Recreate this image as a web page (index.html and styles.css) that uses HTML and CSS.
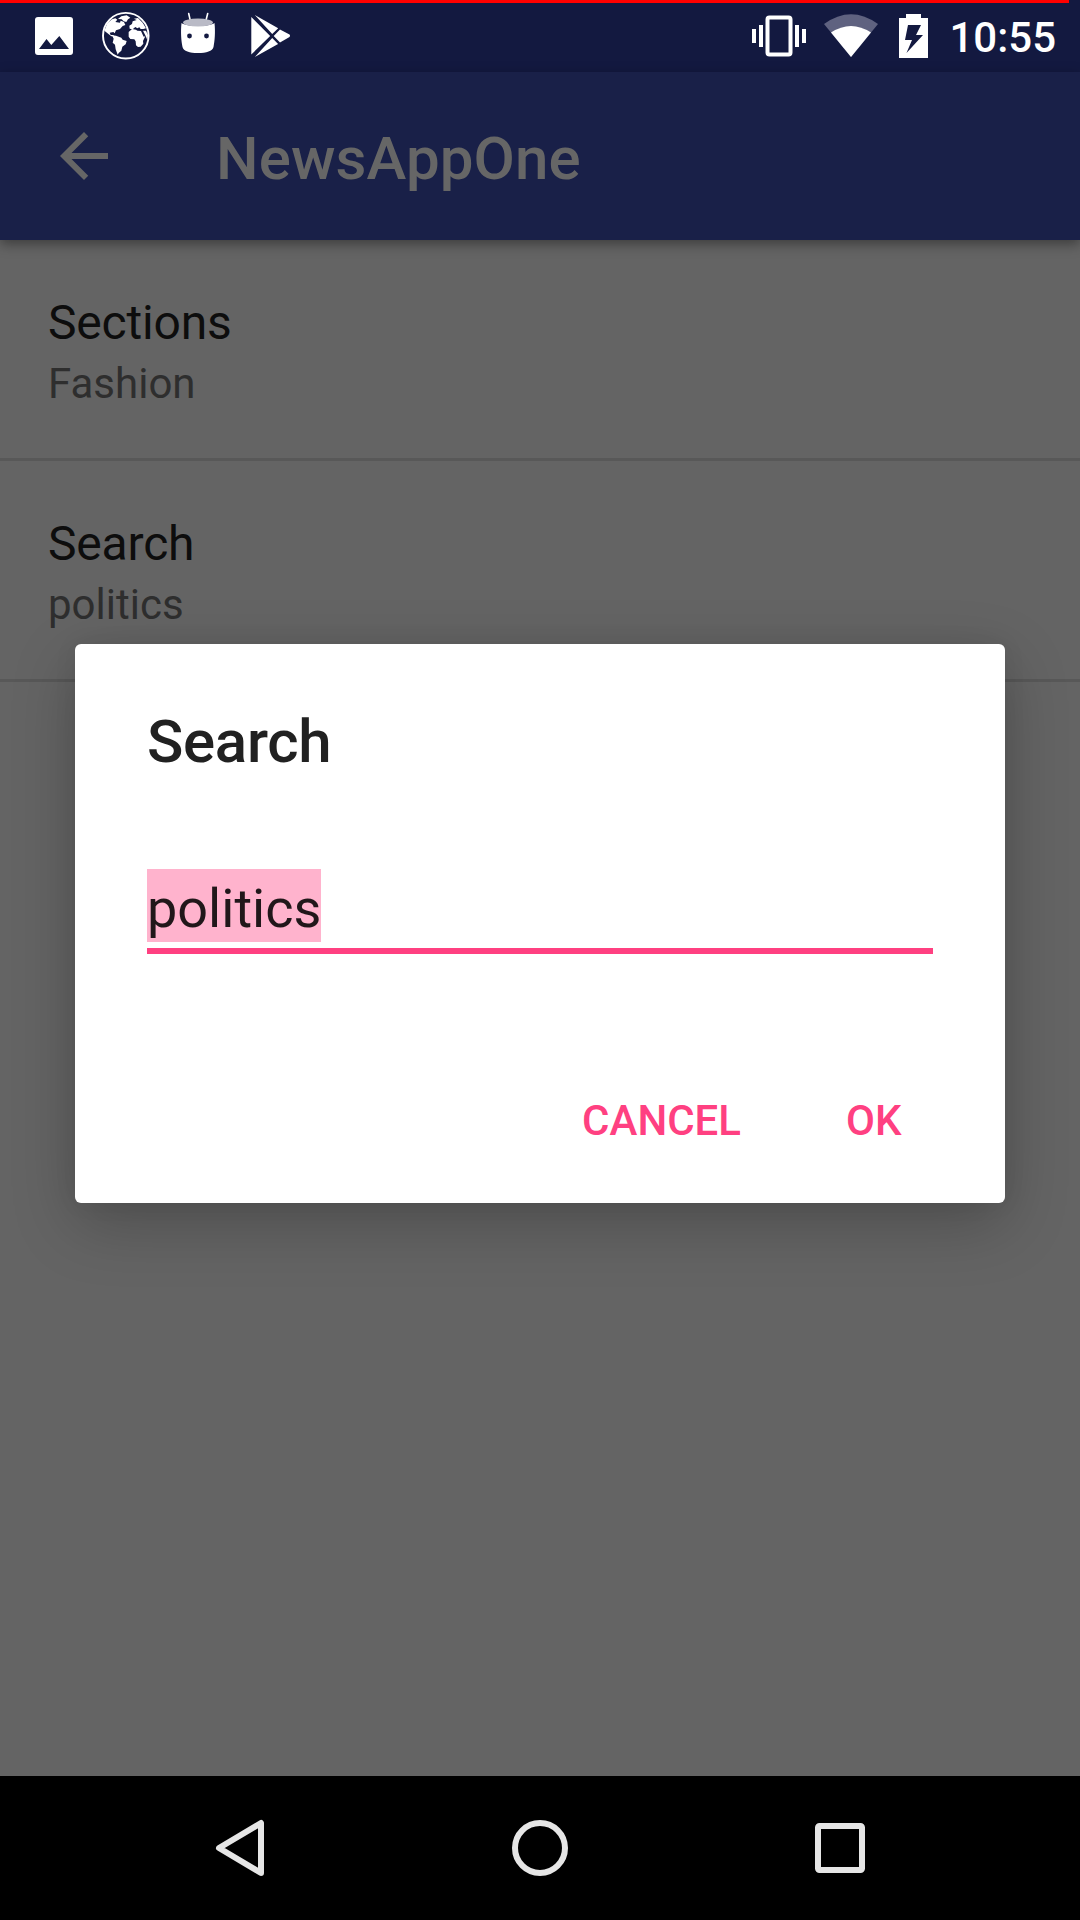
FILE: index.html
```html
<!DOCTYPE html>
<html lang="en">
<head>
<meta charset="utf-8">
<title>NewsAppOne</title>
<link rel="stylesheet" href="styles.css">
</head>
<body>
<div class="screen">
  <header class="status-bar">
    <div class="progress"></div>
    <div class="status-icons">
      <svg class="status-icon" viewBox="0 0 72 72"><path fill="#fff" fill-rule="evenodd" d="M21 17h32a3 3 0 0 1 3 3v32a3 3 0 0 1-3 3H21a3 3 0 0 1-3-3V20a3 3 0 0 1 3-3zM22 49h30L42.300 36l-8 9-4.800-6z"/></svg>
      <svg class="status-icon" viewBox="0 0 72 72">
        <circle cx="36.800" cy="35.700" r="22.800" fill="none" stroke="#fff" stroke-width="1.900"/>
        <g transform="translate(9 8) scale(.3333)" fill="#fff">
          <path d="M19 68L28 46l14-12 10-3 6 4-6 7 14 2 2-6 10 4 4 9-8 3-8 9-12 4-4 9-4-4-11 2 3 7 8 0 2 4-8 0z"/>
          <path d="M60 33l10-8 16-3 11 7-7 5-5 8-8-2-6-6z"/>
          <path d="M42 82l12 1 16 6 4 6 12 4-3 10-10 7-3 12-8 7-3 5-6-16-2-14-7-6 3-12z"/>
          <path d="M95 62l-1-9 8-5 2-8 12-4-8-4 12-2 14 14 10 17-8 2-8 0-4-5-6 3-6-4-8 7z"/>
          <path d="M92 72l10-9 12 2 4 3 11 1 8 17 5-1-7 14 1 8-8 9-8 1-6-5-1-12-4-6-12-1-5-7z"/>
          <path d="M135 68l9 0 6 14-2 14-5-12z"/>
        </g>
      </svg>
      <svg class="status-icon" viewBox="0 0 72 72">
        <path d="M27.700 13.500l1.800 8M46.700 13.500l-2 8" stroke="#fff" stroke-width="1.600" stroke-linecap="round"/>
        <path fill="#fff" d="M20.500 23c5 4 28 4 33 0 1 9 .2 18-1 24-1 4-7 6-15.500 6s-14.500-2-15.500-6c-1.200-6-2-15-1-24z"/>
        <ellipse cx="37" cy="22.500" rx="15" ry="4" fill="#b9bac6"/>
        <circle cx="28.500" cy="36" r="2.400" fill="#131940"/><circle cx="45.500" cy="36" r="2.400" fill="#131940"/>
      </svg>
      <svg class="status-icon" viewBox="0 0 72 72"><path fill="#fff" d="M18.300 17v37.500L37.200 36zM21.800 15L39.200 34l6-5.800zM47 29.500L40.700 36l6.300 6.500 9.500-5.500q1-1.200 0-2.400zM39.200 38L21.800 57l23.300-13z"/></svg>
    </div>
    <div class="system-icons">
      <svg class="vibrate" viewBox="0 0 54 42"><rect x="15.500" y="2.500" width="23" height="37" rx="2" fill="none" stroke="#fff" stroke-width="4"/><path fill="#fff" d="M0 14h4v14H0zM7 10h4v22H7zM43 10h4v22h-4zM50 14h4v14h-4z"/></svg>
      <svg class="wifi" viewBox="0 0 54 43"><path fill="#5f6280" d="M0 10Q27-9.500 54 10L27 43z"/><path fill="#fff" d="M7 18.500Q27 5.500 47 18.500L27 43z"/></svg>
      <svg class="battery" viewBox="0 0 29 44"><path fill="#fff" fill-rule="evenodd" d="M7 0h15v4h7v40H0V4h7zM9 11L6 26h7L7.500 39 24 21h-7l5-10z"/></svg>
      <span class="clock">10:55</span>
    </div>
  </header>
  <div class="app-bar">
    <svg class="back" viewBox="0 0 24 24"><path fill="#666" d="M20 11H7.830l5.590-5.590L12 4l-8 8 8 8 1.410-1.410L7.830 13H20z"/></svg>
    <h1 class="app-title">NewsAppOne</h1>
  </div>
  <main class="preferences">
    <div class="preference"><div class="pref-title">Sections</div><div class="pref-summary">Fashion</div></div>
    <div class="preference"><div class="pref-title">Search</div><div class="pref-summary">politics</div></div>
  </main>
  <nav class="nav-bar">
    <svg class="nav-icon" viewBox="0 0 72 72"><path d="M57 11v50L15 36z" fill="none" stroke="#e6e6e6" stroke-width="6" stroke-linejoin="round"/></svg>
    <svg class="nav-icon" viewBox="0 0 72 72"><circle cx="36" cy="36" r="25" fill="none" stroke="#e6e6e6" stroke-width="6"/></svg>
    <svg class="nav-icon" viewBox="0 0 72 72"><rect x="14" y="14" width="44" height="44" rx="1.500" fill="none" stroke="#e6e6e6" stroke-width="6"/></svg>
  </nav>
  <section class="dialog">
    <h2 class="dialog-title">Search</h2>
    <div class="field"><span class="selection">politics</span></div>
    <div class="actions"><span class="action">CANCEL</span><span class="action">OK</span></div>
  </section>
</div>
</body>
</html>
```
FILE: styles.css
```css
* { box-sizing: border-box; }
body { margin: 0; font-family: Roboto, sans-serif; }
h1, h2 { margin: 0; font-weight: 500; }
svg { display: block; flex: none; }

.screen {
  position: relative;
  display: flex;
  flex-direction: column;
  width: 1080px;
  height: 1920px;
  overflow: hidden;
  background: #646464;
}

.status-bar {
  position: relative;
  display: flex;
  justify-content: space-between;
  height: 72px;
  padding: 0 24px 0 17px;
  background: #131940;
}
.progress { position: absolute; left: 0; top: 0; width: 1069px; height: 3px; background: #f00; }
.status-icons { display: flex; }
.status-icon { width: 72px; height: 72px; }
.system-icons { display: flex; align-items: flex-start; }
.vibrate { width: 54px; height: 42px; margin: 15px 18px 0 0; }
.wifi { width: 54px; height: 43px; margin: 14px 21px 0 0; }
.battery { width: 29px; height: 44px; margin: 14px 21px 0 0; }
.clock { font-size: 42px; font-weight: 500; line-height: 49px; margin-top: 13px; color: #fff; }

.app-bar {
  position: relative;
  z-index: 1;
  display: flex;
  height: 168px;
  padding-left: 48px;
  background: #192048;
  box-shadow: 0 4px 12px rgba(0, 0, 0, .4);
}
.back { width: 72px; height: 72px; margin: 48px 96px 0 0; }
.app-title { font-size: 60px; line-height: 71px; margin-top: 51px; letter-spacing: .1px; color: #666; }

.preferences { flex: 1; }
.preference { height: 221px; padding: 54px 48px 0; border-bottom: 3px solid #585858; }
.pref-title { font-size: 48px; line-height: 57px; letter-spacing: -.18px; color: #0d0d0d; }
.pref-summary { margin-top: 8px; font-size: 42px; line-height: 49px; color: #2e2e2e; }

.nav-bar {
  display: flex;
  justify-content: center;
  gap: 228px;
  height: 144px;
  padding-top: 36px;
  background: #000;
}
.nav-icon { width: 72px; height: 72px; }

.dialog {
  position: absolute;
  left: 75px;
  top: 644px;
  width: 930px;
  height: 559px;
  padding: 62px 72px 0;
  border-radius: 6px;
  background: #fff;
  box-shadow: 0 20px 64px rgba(0, 0, 0, .23), 0 0 24px rgba(0, 0, 0, .06);
}
.dialog-title { font-size: 60px; line-height: 71px; letter-spacing: -.3px; color: #212121; }
.field { display: flex; height: 85px; margin-top: 92px; border-bottom: 6px solid #ff4081; }
.selection { height: 73px; padding-top: 8px; font-size: 54px; line-height: 63px; background: #ffb3cd; color: #21171a; }
.actions { display: flex; justify-content: flex-end; gap: 105px; margin-top: 142px; padding-right: 31.5px; }
.action { font-size: 42px; font-weight: 500; line-height: 49px; color: #ff4081; }
```
